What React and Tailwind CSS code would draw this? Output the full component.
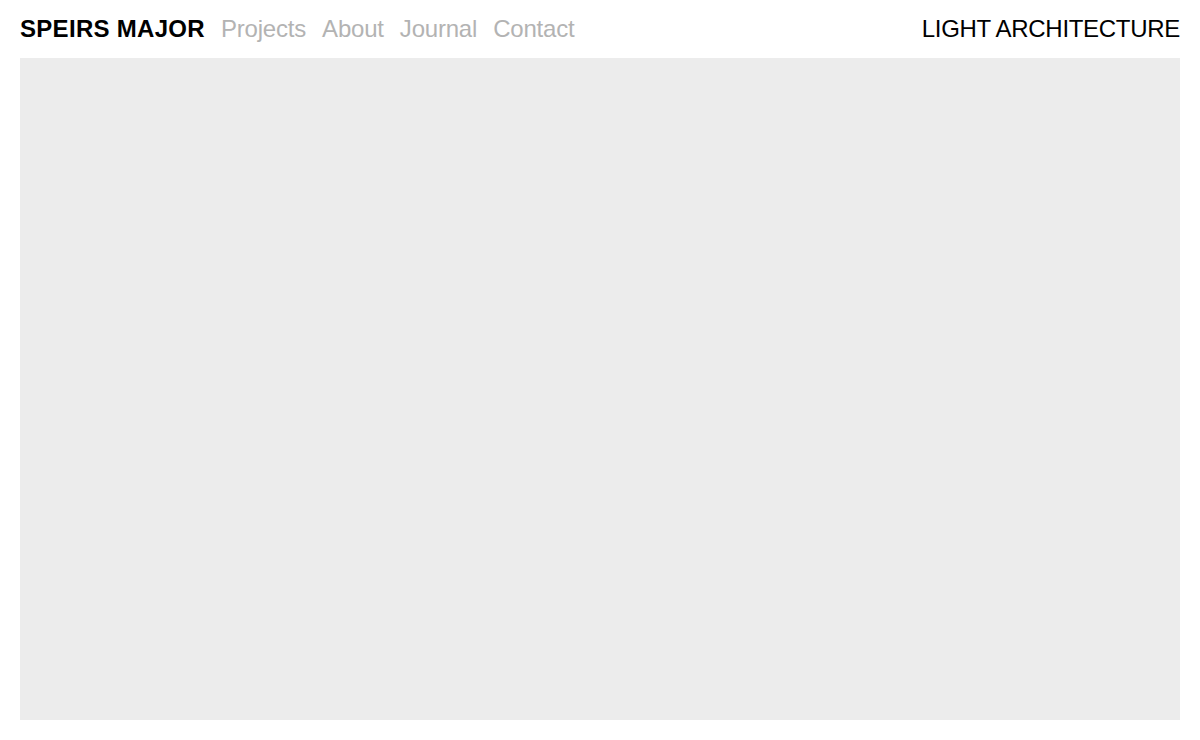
export default function App() {
  return (
    <div className="w-[1200px] h-[740px] bg-white flex flex-col px-5 pb-5" style={{ fontFamily: '"Liberation Sans", Arial, sans-serif' }}>
      <header className="h-[58px] flex items-center justify-between shrink-0">
        <nav className="flex items-center gap-4 text-[24px] leading-none">
          <span className="font-bold text-black tracking-[0.3px]">SPEIRS MAJOR</span>
          <span className="text-[#b3b3b3] tracking-[-0.2px]">Projects</span>
          <span className="text-[#b3b3b3] tracking-[-0.2px]">About</span>
          <span className="text-[#b3b3b3] tracking-[-0.2px]">Journal</span>
          <span className="text-[#b3b3b3] tracking-[-0.2px]">Contact</span>
        </nav>
        <div className="text-[24px] leading-none text-black tracking-[-0.3px]">LIGHT ARCHITECTURE</div>
      </header>
      <main className="flex-1 bg-[#ececec]"></main>
    </div>
  );
}
